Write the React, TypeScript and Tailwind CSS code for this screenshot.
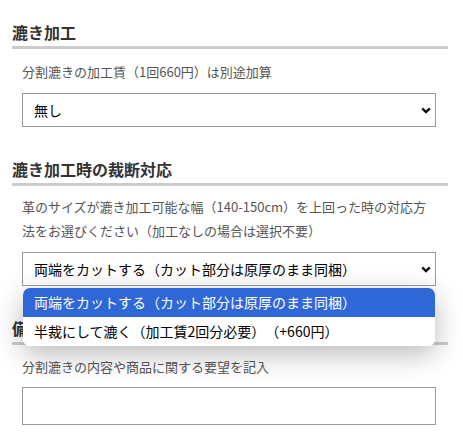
import * as React from "react"

function Chevron() {
  return (
    <svg width="10" height="7" viewBox="0 0 10 7" className="shrink-0">
      <path d="M1.2 1.3 L5 5 L8.8 1.3" fill="none" stroke="#111" strokeWidth="2.4" />
    </svg>
  )
}

function Heading({ children }: { children: React.ReactNode }) {
  return (
    <h2 className="text-[16px] leading-6 font-bold text-[#333] pb-[2px] border-b-[3px] border-[#cccccc]">
      {children}
    </h2>
  )
}

function SelectBox({ value }: { value: string }) {
  return (
    <div className="h-[34px] border border-[#999] bg-white flex items-center justify-between pl-[11px] pr-[4px]">
      <span className="text-[14px] text-black">{value}</span>
      <Chevron />
    </div>
  )
}

export default function App() {
  const options = [
    "両端をカットする（カット部分は原厚のまま同梱）",
    "半裁にして漉く（加工賃2回分必要）（+660円）",
  ]

  return (
    <div
      className="w-[463px] h-[448px] bg-white pl-3 pr-[15px] pt-5 overflow-hidden [text-spacing-trim:space-all]"
      style={{ fontFamily: '"Noto Sans CJK JP", "Noto Sans", sans-serif' }}
    >
      {/* 漉き加工 */}
      <section>
        <Heading>漉き加工</Heading>
        <div className="pl-[10px] pr-[12px]">
          <p className="mt-[11px] text-[13px] leading-6 text-[#555]">分割漉きの加工賃（1回660円）は別途加算</p>
          <div className="mt-[9px]">
            <SelectBox value="無し" />
          </div>
        </div>
      </section>

      {/* 裁断対応 */}
      <section className="mt-[30px]">
        <Heading>漉き加工時の裁断対応</Heading>
        <div className="pl-[10px] pr-[12px]">
          <p className="mt-[9px] text-[13px] leading-6 text-[#555]">
            革のサイズが漉き加工可能な幅（140-150cm）を上回った時の対応方法をお選びください（加工なしの場合は選択不要）
          </p>
          <div className="relative mt-[9px]">
            <SelectBox value={options[0]} />
            {/* open dropdown */}
            <div className="absolute left-[1px] right-[1px] top-[36px] z-10 bg-white rounded-[7px] overflow-hidden shadow-[0_8px_28px_rgba(0,0,0,0.28)]">
              {options.map((o, i) => (
                <div
                  key={o}
                  className={`h-[29px] flex items-center pl-[11px] text-[14px] ${
                    i === 0 ? "bg-[#2f67d7] text-white" : "bg-white text-black"
                  }`}
                >
                  {o}
                </div>
              ))}
            </div>
          </div>
        </div>
      </section>

      {/* 備考 */}
      <section className="mt-[30px]">
        <Heading>備考</Heading>
        <div className="pl-[10px] pr-[12px]">
          <p className="mt-[10px] text-[13px] leading-6 text-[#555]">分割漉きの内容や商品に関する要望を記入</p>
          <div className="mt-2 h-[38px] border border-[#999] bg-white" />
        </div>
      </section>
    </div>
  )
}
